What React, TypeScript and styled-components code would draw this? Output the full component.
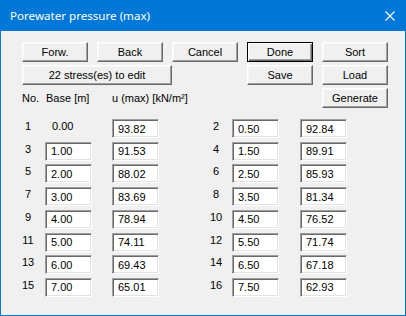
import React from 'react'
import styled, { createGlobalStyle } from 'styled-components'

const GlobalStyle = createGlobalStyle`
  body {
    margin: 0;
    background: #f0f0f0;
    font-family: 'Liberation Sans', Arial, sans-serif;
  }
`

const rows = [
  { no: 1, base: '0.00', u: '93.82', fixed: true },
  { no: 2, base: '0.50', u: '92.84' },
  { no: 3, base: '1.00', u: '91.53' },
  { no: 4, base: '1.50', u: '89.91' },
  { no: 5, base: '2.00', u: '88.02' },
  { no: 6, base: '2.50', u: '85.93' },
  { no: 7, base: '3.00', u: '83.69' },
  { no: 8, base: '3.50', u: '81.34' },
  { no: 9, base: '4.00', u: '78.94' },
  { no: 10, base: '4.50', u: '76.52' },
  { no: 11, base: '5.00', u: '74.11' },
  { no: 12, base: '5.50', u: '71.74' },
  { no: 13, base: '6.00', u: '69.43' },
  { no: 14, base: '6.50', u: '67.18' },
  { no: 15, base: '7.00', u: '65.01' },
  { no: 16, base: '7.50', u: '62.93' },
]

export default function App() {
  return (
    <Window>
      <GlobalStyle />
      <TitleBar>
        <Title>Porewater pressure (max)</Title>
        <CloseIcon width='10' height='10' viewBox='0 0 10 10'>
          <path d='M0.5 0.5 L9.5 9.5 M9.5 0.5 L0.5 9.5' stroke='#fff' strokeWidth='1.1' />
        </CloseIcon>
      </TitleBar>
      <Body>
        <ButtonGrid>
          <Button>Forw.</Button>
          <Button>Back</Button>
          <Button>Cancel</Button>
          <Button $default>Done</Button>
          <Button>Sort</Button>
          <WideButton>22 stress(es) to edit</WideButton>
          <Button $col={4}>Save</Button>
          <Button $col={5}>Load</Button>
          <HeaderRow>
            <HeaderCell $w={24}>No.</HeaderCell>
            <HeaderCell $w={66}>Base [m]</HeaderCell>
            <HeaderCell>u (max) [kN/m²]</HeaderCell>
          </HeaderRow>
          <Button $col={5}>Generate</Button>
        </ButtonGrid>
        <DataGrid>
          {rows.map((r) => (
            <React.Fragment key={r.no}>
              <NumCell>{r.no}</NumCell>
              {r.fixed ? <StaticValue>{r.base}</StaticValue> : <Field defaultValue={r.base} />}
              <Field defaultValue={r.u} />
            </React.Fragment>
          ))}
        </DataGrid>
      </Body>
    </Window>
  )
}

const Window = styled.div`
  width: 406px;
  height: 316px;
  display: flex;
  flex-direction: column;
  font-size: 11px;
  color: #000;
`

const TitleBar = styled.div`
  height: 31px;
  flex: none;
  background: #0078d7;
  display: flex;
  align-items: center;
  justify-content: space-between;
  padding: 0 11px 0 10px;
  box-sizing: border-box;
`

const Title = styled.span`
  color: #fff;
  font-family: 'Noto Sans', 'Open Sans', sans-serif;
  font-size: 11.6px;
  padding-bottom: 1px;
`

const CloseIcon = styled.svg`
  display: block;
  margin-top: 1px;
`

const Body = styled.div`
  flex: 1;
  background: #f0f0f0;
  border: 1px solid #0078d7;
  border-top: none;
  padding: 11px 0 0 21px;
`

const ButtonGrid = styled.div`
  display: grid;
  grid-template-columns: repeat(5, 66px);
  grid-auto-rows: 20px;
  column-gap: 9px;
  row-gap: 3px;
`

const Button = styled.button<{ $default?: boolean; $col?: number }>`
  grid-column: ${(p) => p.$col ?? 'auto'};
  box-sizing: border-box;
  height: 20px;
  margin: 0;
  padding: 0;
  font: inherit;
  color: #000;
  background: #f0f0f0;
  border: 1px solid;
  border-color: ${(p) => (p.$default ? '#000' : '#fff #696969 #696969 #fff')};
  box-shadow: ${(p) =>
    p.$default
      ? 'inset 1px 1px #fff, inset -1px -1px #696969, inset -2px -2px #a0a0a0'
      : 'inset -1px -1px #a0a0a0, inset 1px 1px #f8f8f8'};
`

const WideButton = styled(Button)`
  grid-column: 1 / span 3;
  width: 150px;
`

const HeaderRow = styled.div`
  grid-column: 1 / span 4;
  display: flex;
  align-items: center;
`

const HeaderCell = styled.span<{ $w?: number }>`
  width: ${(p) => (p.$w ? `${p.$w}px` : 'auto')};
  flex: none;
`

const DataGrid = styled.div`
  margin-top: 11px;
  display: grid;
  grid-template-columns: 23px 67px 98px 22px 68px 47px;
  grid-template-rows: repeat(8, 19px);
  row-gap: 3.714px;
`

const NumCell = styled.span`
  width: 12px;
  text-align: center;
  line-height: 14px;
  white-space: nowrap;
  display: flex;
  justify-content: center;
`

const StaticValue = styled.span`
  padding-left: 7px;
  line-height: 14px;
`

const Field = styled.input.attrs({ type: 'text', readOnly: true })`
  box-sizing: border-box;
  width: 47px;
  height: 19px;
  margin: 0;
  padding: 0 0 0 5px;
  font: inherit;
  color: #000;
  background: #fff;
  outline: none;
  border: 1px solid;
  border-color: #a0a0a0 #fff #fff #a0a0a0;
  box-shadow: inset 1px 1px #696969, inset -1px -1px #e3e3e3;
`
